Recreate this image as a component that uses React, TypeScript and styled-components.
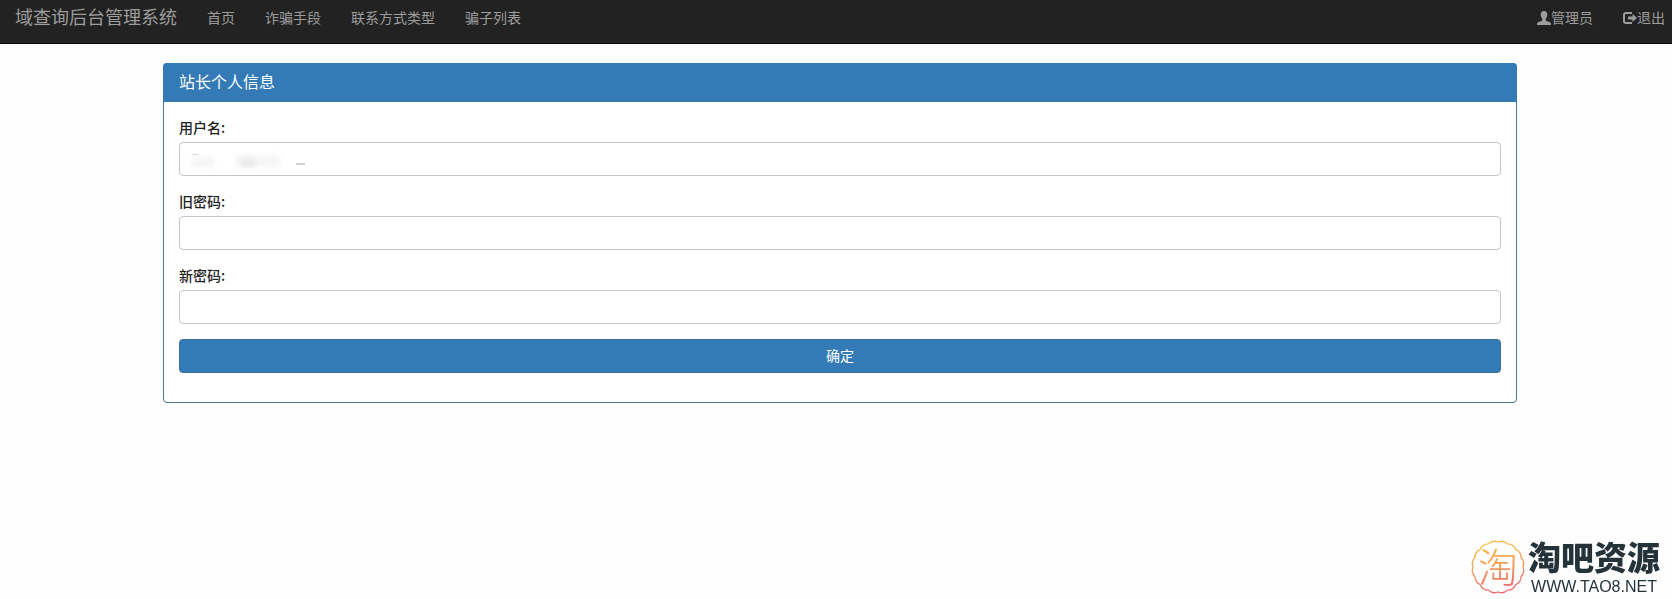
import React from "react";
import styled, { createGlobalStyle } from "styled-components";

const GlobalStyle = createGlobalStyle`
  *, *::before, *::after { box-sizing: border-box; }
  body {
    margin: 0;
    background: #fefefe;
    color: #222;
    font-family: "Liberation Sans", "Noto Sans CJK SC", sans-serif;
    font-size: 14px;
    line-height: 20px;
  }
`;

const Navbar = styled.nav`
  display: flex;
  align-items: flex-start;
  justify-content: space-between;
  min-height: 44px;
  padding: 8px 7px 0 15px;
  background: #222;
  border-bottom: 1px solid #080808;
`;

const NavGroup = styled.div`
  display: flex;
  align-items: center;
  gap: 30px;
`;

const NavLink = styled.a<{ $brand?: boolean }>`
  display: flex;
  align-items: center;
  color: #9d9d9d;
  font-size: ${(p) => (p.$brand ? 18 : 14)}px;
  line-height: 20px;
  text-decoration: none;
  white-space: nowrap;

  &:hover { color: #fff; }
`;

const Glyph = styled.svg`
  flex: none;
  width: 14px;
  height: 14px;
  fill: currentColor;
`;

const Main = styled.main`
  padding: 19px 155px 0 163px;
`;

const Panel = styled.section`
  border: 1px solid #4d7d8c;
  border-radius: 4px;
  background: #fff;
`;

const PanelHeading = styled.h1`
  margin: -1px -1px 0;
  padding: 10px 16px 9px;
  border-radius: 4px 4px 0 0;
  background: #337ab7;
  color: #fff;
  font-size: 16px;
  font-weight: 400;
  line-height: 20px;
`;

const Form = styled.form`
  display: flex;
  flex-direction: column;
  gap: 15px;
  padding: 15px 15px 29px;
`;

const Field = styled.div`
  display: flex;
  flex-direction: column;
  gap: 5px;
`;

const Label = styled.label`
  line-height: 20px;
  font-family: "Noto Sans CJK SC", sans-serif;
  font-weight: 500;
`;

const InputWrap = styled.div`
  position: relative;
  display: flex;
`;

const Input = styled.input`
  width: 100%;
  height: 34px;
  padding: 6px 12px;
  border: 1px solid #c4c4c8;
  border-radius: 4px;
  background: #fff;
  color: #555;
  font: inherit;
`;

const Smudge = styled.svg`
  position: absolute;
  left: 8px;
  top: 8px;
  width: 124px;
  height: 22px;
  pointer-events: none;
`;

const Submit = styled.button`
  height: 34px;
  border: 1px solid #3a6f98;
  border-radius: 4px;
  background: #337ab7;
  color: #fff;
  font: inherit;
  cursor: pointer;
`;

const Watermark = styled.aside`
  position: fixed;
  right: 12px;
  bottom: 1px;
  display: flex;
  align-items: center;
  gap: 3px;
  color: #24323a;
`;

const Seal = styled.svg`
  width: 54px;
  height: 60px;
  overflow: visible;
`;

const WatermarkText = styled.div`
  display: flex;
  flex-direction: column;
  align-items: center;
  padding-top: 2px;
`;

const WatermarkName = styled.strong`
  font-size: 33px;
  font-weight: 900;
  line-height: 36px;
`;

const WatermarkUrl = styled.span`
  font-size: 16px;
  line-height: 20px;
`;

const navItems = ["首页", "诈骗手段", "联系方式类型", "骗子列表"];

const fields = [
  { id: "username", label: "用户名:", type: "text", masked: true },
  { id: "old-password", label: "旧密码:", type: "password", masked: false },
  { id: "new-password", label: "新密码:", type: "password", masked: false },
];

// A ring made of shallow outward arcs.
function scallopedRing(cx: number, cy: number, r: number, count: number): string {
  const at = (i: number) => {
    const a = (i / count) * Math.PI * 2;
    return `${(cx + r * Math.cos(a)).toFixed(2)} ${(cy + r * Math.sin(a)).toFixed(2)}`;
  };
  let d = `M${at(0)}`;
  for (let i = 1; i <= count; i++) d += `A9 9 0 0 1 ${at(i)}`;
  return d + "Z";
}

const UserIcon = () => (
  <Glyph viewBox="0 0 14 14" aria-hidden="true">
    <path d="M7 0C4.900 0 3.700 1.500 3.700 3.600C3.700 5.300 4.400 6.900 5.300 7.700V8.900C5.300 9.400 5 9.700 4.500 9.900L1.300 11.200C.5 11.600 0 12.100 0 13V14H14V13C14 12.100 13.500 11.600 12.700 11.200L9.500 9.900C9 9.700 8.700 9.400 8.700 8.900V7.700C9.600 6.900 10.300 5.300 10.300 3.600C10.300 1.500 9.100 0 7 0Z" />
  </Glyph>
);

const LogoutIcon = () => (
  <Glyph viewBox="0 0 14 14" aria-hidden="true">
    <path d="M9 1H3A3 3 0 0 0 0 4V10A3 3 0 0 0 3 13H9V11H3A1 1 0 0 1 2 10V4A1 1 0 0 1 3 3H9ZM9.500 3V5.600H5V8.400H9.500V11L14 7Z" />
  </Glyph>
);

export default function App() {
  return (
    <>
      <GlobalStyle />
      <Navbar>
        <NavGroup>
          <NavLink $brand href="#">域查询后台管理系统</NavLink>
          {navItems.map((item) => (
            <NavLink href="#" key={item}>{item}</NavLink>
          ))}
        </NavGroup>
        <NavGroup>
          <NavLink href="#"><UserIcon />管理员</NavLink>
          <NavLink href="#"><LogoutIcon />退出</NavLink>
        </NavGroup>
      </Navbar>
      <Main>
        <Panel>
          <PanelHeading>站长个人信息</PanelHeading>
          <Form onSubmit={(e) => e.preventDefault()}>
            {fields.map((f) => (
              <Field key={f.id}>
                <Label htmlFor={f.id}>{f.label}</Label>
                <InputWrap>
                  <Input id={f.id} type={f.type} />
                  {f.masked && (
                    <Smudge viewBox="0 0 124 22" aria-hidden="true">
                      <defs>
                        <filter id="soft" x="-40%" y="-60%" width="180%" height="220%">
                          <feGaussianBlur stdDeviation="2.500" />
                        </filter>
                      </defs>
                      <rect x="5" y="8" width="22" height="9" fill="#f4f4f4" filter="url(#soft)" />
                      <rect x="48" y="4" width="46" height="13" fill="#f7f7f7" filter="url(#soft)" />
                      <ellipse cx="61" cy="13" rx="9" ry="4" fill="#e8e8e8" filter="url(#soft)" />
                      <rect x="5" y="4" width="6" height="1" fill="#d8d8d8" />
                      <rect x="109" y="13" width="9" height="2" fill="#cfcfcf" />
                    </Smudge>
                  )}
                </InputWrap>
              </Field>
            ))}
            <Submit type="submit">确定</Submit>
          </Form>
        </Panel>
      </Main>
      <Watermark>
        <Seal viewBox="0 0 54 60" aria-hidden="true">
          <defs>
            <linearGradient id="seal" gradientUnits="userSpaceOnUse" x1="20" y1="3" x2="30" y2="57">
              <stop offset="0" stopColor="#f8c03c" />
              <stop offset="0.500" stopColor="#f39a5c" />
              <stop offset="1" stopColor="#ee5f6c" />
            </linearGradient>
          </defs>
          <path d={scallopedRing(27, 29, 25, 16)} fill="none" stroke="url(#seal)" strokeWidth="1.300" />
          <text x="27" y="44" textAnchor="middle" fontSize="40" fontWeight="300" fontFamily="'Noto Sans CJK SC', sans-serif" fill="url(#seal)">淘</text>
        </Seal>
        <WatermarkText>
          <WatermarkName>淘吧资源</WatermarkName>
          <WatermarkUrl>WWW.TAO8.NET</WatermarkUrl>
        </WatermarkText>
      </Watermark>
    </>
  );
}
